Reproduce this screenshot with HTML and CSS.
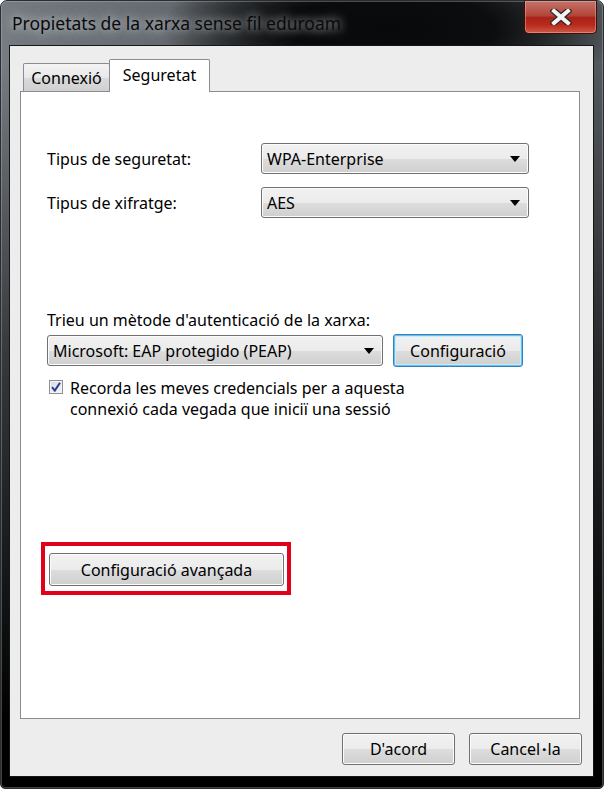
FILE: index.html
```html
<!DOCTYPE html>
<html lang="ca">
<head>
<meta charset="utf-8">
<title>Propietats de la xarxa sense fil eduroam</title>
<link rel="stylesheet" href="styles.css">
</head>
<body>
<div class="window">
  <div class="titlebar">
    <span class="title">Propietats de la xarxa sense fil eduroam</span>
    <div class="close">
      <svg width="22" height="16" viewBox="0 0 22 16" aria-hidden="true">
        <path d="M4 2 L18 14 M18 2 L4 14" stroke="#2a2a2a" stroke-width="6.5" stroke-linecap="square"/>
        <path d="M4 2 L18 14 M18 2 L4 14" stroke="#f4f4f4" stroke-width="4" stroke-linecap="square"/>
      </svg>
    </div>
  </div>
  <div class="client">
    <div class="tabs">
      <div class="tab">Connexió</div>
      <div class="tab active">Seguretat</div>
    </div>
    <div class="panel">
      <div class="fields">
        <span class="label">Tipus de seguretat:</span>
        <div class="combo"><span>WPA-Enterprise</span><i class="arrow"></i></div>
        <span class="label">Tipus de xifratge:</span>
        <div class="combo"><span>AES</span><i class="arrow"></i></div>
      </div>
      <div class="auth">
        <span class="label">Trieu un mètode d'autenticació de la xarxa:</span>
        <div class="auth-row">
          <div class="combo wide"><span>Microsoft: EAP protegido (PEAP)</span><i class="arrow"></i></div>
          <div class="btn focus config">Configuració</div>
        </div>
        <div class="check-row">
          <span class="checkbox">
            <svg width="10" height="10" viewBox="0 0 10 10" aria-hidden="true">
              <path d="M1 5.2 L3.8 8.6 L9 0.8" fill="none" stroke="#243f99" stroke-width="2"/>
            </svg>
          </span>
          <span class="check-text">Recorda les meves credencials per a aquesta<br>connexió cada vegada que iniciï una sessió</span>
        </div>
      </div>
      <div class="highlight">
        <div class="btn advanced">Configuració avançada</div>
      </div>
    </div>
    <div class="footer">
      <div class="btn dlg">D'acord</div>
      <div class="btn dlg">Cancel<span class="middot">·</span>la</div>
    </div>
  </div>
</div>
</body>
</html>
```

FILE: styles.css
```css
html, body {
  margin: 0;
  padding: 0;
  background: #ffffff;
}

body {
  font-family: "Noto Sans", "Open Sans", sans-serif;
  font-size: 16px;
  color: #000;
}

.window {
  box-sizing: border-box;
  width: 604px;
  height: 789px;
  border-radius: 7px 7px 5px 5px;
  border: 1px solid #2a2d30;
  box-shadow: inset 0 0 0 1px rgba(190, 196, 202, 0.35);
  padding: 0 9px 11px 8px;
  display: flex;
  flex-direction: column;
  background:
    linear-gradient(to bottom, rgba(0,0,0,0) 0px, rgba(0,0,0,0) 60px, rgba(0,0,0,0.55) 360px, #000 720px),
    radial-gradient(ellipse 230px 80px at 390px 28px, #08090a 0%, rgba(8,9,10,0.92) 45%, rgba(8,9,10,0) 100%),
    linear-gradient(to right, #767c82 0%, #656b70 28%, #2a2d30 52%, #34383c 78%, #565b5f 100%);
}

.titlebar {
  height: 44px;
  display: flex;
  align-items: flex-start;
  justify-content: space-between;
}

.title {
  margin-top: 10px;
  margin-left: 3px;
  font-size: 17.5px;
  color: #0a0a0a;
  text-shadow: 0 0 8px rgba(230, 235, 240, 0.7), 0 0 14px rgba(230, 235, 240, 0.5);
}

.close {
  box-sizing: border-box;
  width: 73px;
  height: 33px;
  margin-right: -3px;
  border: 1px solid #3b0f0b;
  border-top: none;
  border-radius: 0 0 5px 5px;
  display: flex;
  align-items: center;
  justify-content: center;
  background: linear-gradient(to bottom, #c47368 0%, #b4463a 45%, #a8231a 52%, #b92a1c 75%, #cc5a46 100%);
  box-shadow: inset 0 0 0 1px rgba(255, 200, 190, 0.4);
}

.client {
  flex: 1;
  box-sizing: border-box;
  background: #ededed;
  border: 1px solid #141618;
  padding: 13px 13px 11px 10px;
  display: flex;
  flex-direction: column;
}

.tabs {
  display: flex;
  align-items: flex-end;
  margin-left: 3px;
  height: 32px;
  position: relative;
  z-index: 1;
}

.tab {
  box-sizing: border-box;
  height: 28px;
  width: 87px;
  border: 1px solid #898c95;
  border-bottom: none;
  border-radius: 2px 2px 0 0;
  background: linear-gradient(to bottom, #f4f4f4 0%, #e8e8e8 50%, #dadada 51%, #d0d0d0 100%);
  display: flex;
  align-items: center;
  justify-content: center;
  padding-top: 1px;
}

.tab.active {
  height: 33px;
  width: 101px;
  margin-left: -1px;
  margin-bottom: -1px;
  background: #fff;
  padding-bottom: 3px;
}

.panel {
  flex: 1;
  background: #fff;
  border: 1px solid #898c95;
  padding-left: 26px;
  display: flex;
  flex-direction: column;
  align-items: flex-start;
}

.fields {
  margin-top: 51px;
  display: grid;
  grid-template-columns: 214px 268px;
  row-gap: 13px;
  align-items: center;
}

.combo, .btn {
  box-sizing: border-box;
  border: 1px solid #707070;
  border-radius: 3px;
  background: linear-gradient(to bottom, #f2f2f2 0%, #ebebeb 50%, #dddddd 51%, #cfcfcf 100%);
  box-shadow: inset 0 0 0 1px #fcfcfc;
  display: flex;
  align-items: center;
}

.combo {
  height: 31px;
  padding: 0 8px 0 5px;
  justify-content: space-between;
}

.arrow {
  width: 0;
  height: 0;
  border-left: 5px solid transparent;
  border-right: 5px solid transparent;
  border-top: 6px solid #000;
}

.auth {
  margin-top: 91px;
  display: flex;
  flex-direction: column;
}

.auth-row {
  margin-top: 3px;
  display: flex;
  align-items: center;
  gap: 10px;
}

.combo.wide {
  width: 336px;
}

.btn {
  justify-content: center;
}

.btn.config {
  width: 130px;
  height: 33px;
}

.btn.focus {
  border-color: #3c7fb1;
  box-shadow: inset 0 0 0 1px #60c2f4, inset 0 0 0 2px #c6ecfd;
}

.check-row {
  margin-top: 11px;
  display: flex;
  align-items: flex-start;
  gap: 7px;
  line-height: 21px;
}

.checkbox {
  box-sizing: border-box;
  margin-top: 2px;
  margin-left: 2px;
  width: 14px;
  height: 14px;
  border: 1px solid #8e8f8f;
  background: linear-gradient(135deg, #d8dce3 0%, #f4f5f7 100%);
  box-shadow: inset 0 0 0 1px #f4f4f4;
  display: flex;
  align-items: center;
  justify-content: center;
}

.highlight {
  margin-top: 122px;
  margin-left: -6px;
  border: 4px solid #e2001a;
  padding: 7px 3px 5px 4px;
}

.btn.advanced {
  width: 235px;
  height: 33px;
}

.footer {
  margin-top: 14px;
  margin-right: -2px;
  display: flex;
  justify-content: flex-end;
  gap: 14px;
}

.btn.dlg {
  width: 113px;
  height: 32px;
}

.middot {
  padding: 0 1px 0 2px;
  font-weight: 700;
}
```
